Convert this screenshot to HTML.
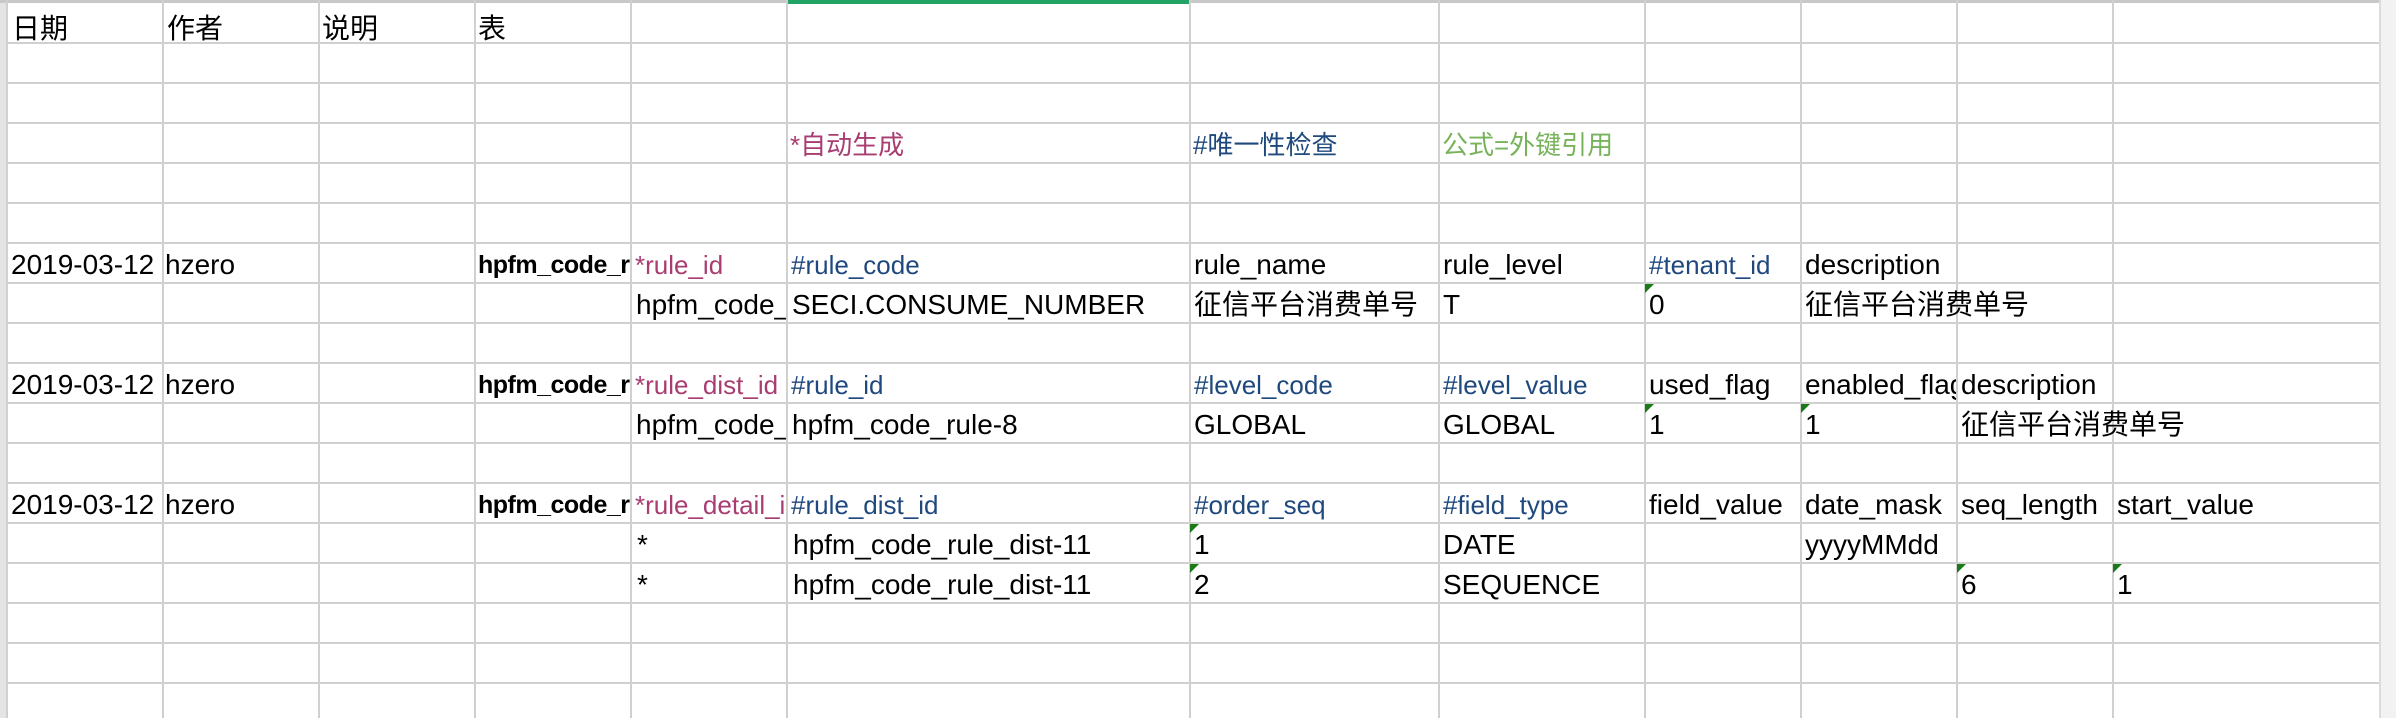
<!DOCTYPE html>
<html><head><meta charset="utf-8"><style>
body{margin:0;width:2396px;height:718px;overflow:hidden;background:#fff;position:relative;font-family:"Liberation Sans","Noto Sans CJK SC",sans-serif;}
.v{position:absolute;top:0;height:718px;width:2px;background:#d0d0d0}
.h{position:absolute;left:6px;width:2373px;height:2px;background:#d0d0d0}
.c{position:absolute;height:40px;line-height:44px;font-size:28px;color:#000;white-space:nowrap;overflow:hidden}
.m{color:#a83d72;font-size:26px}
.b{color:#1f497d;font-size:26px}
.g{color:#77b35a;font-size:26px}
.t{font-size:25px;font-weight:bold;letter-spacing:-0.5px}
.cj{font-size:28px}
.hd{line-height:52px}
.tri{position:absolute;width:0;height:0;border-top:9px solid #1a7a1a;border-right:9px solid transparent}
</style></head><body>
<div style="position:absolute;left:0;top:0;width:6px;height:718px;background:#e4e4e4"></div>
<div style="position:absolute;left:2379px;top:0;width:17px;height:718px;background:#f2f2f2;border-left:2px solid #dcdcdc"></div>
<div style="position:absolute;left:0;top:0;width:2379px;height:3px;background:#c8c8c8"></div>
<div style="position:absolute;left:787px;top:0;width:403px;height:4px;background:#21a366"></div>

<div class="v" style="left:6px"></div><div class="v" style="left:162px"></div><div class="v" style="left:318px"></div><div class="v" style="left:474px"></div><div class="v" style="left:630px"></div><div class="v" style="left:786px"></div><div class="v" style="left:1189px"></div><div class="v" style="left:1438px"></div><div class="v" style="left:1644px"></div><div class="v" style="left:1800px"></div><div class="v" style="left:1956px"></div><div class="v" style="left:2112px"></div>
<div class="h" style="top:42px"></div><div class="h" style="top:82px"></div><div class="h" style="top:122px"></div><div class="h" style="top:162px"></div><div class="h" style="top:202px"></div><div class="h" style="top:242px"></div><div class="h" style="top:282px"></div><div class="h" style="top:322px"></div><div class="h" style="top:362px"></div><div class="h" style="top:402px"></div><div class="h" style="top:442px"></div><div class="h" style="top:482px"></div><div class="h" style="top:522px"></div><div class="h" style="top:562px"></div><div class="h" style="top:602px"></div><div class="h" style="top:642px"></div><div class="h" style="top:682px"></div>

<div class="c cj hd" style="top:3px;left:12px">日期</div>
<div class="c cj hd" style="top:3px;left:167px">作者</div>
<div class="c cj hd" style="top:3px;left:322px">说明</div>
<div class="c cj hd" style="top:3px;left:478px">表</div>

<div class="c m" style="top:123px;left:790px">*自动生成</div>
<div class="c b" style="top:123px;left:1193px">#唯一性检查</div>
<div class="c g" style="top:123px;left:1442px">公式=外键引用</div>

<!-- block 1 -->
<div class="c" style="top:243px;left:11px;width:151px">2019-03-12</div>
<div class="c" style="top:243px;left:165px">hzero</div>
<div class="c t" style="top:243px;left:478px;width:152px">hpfm_code_rule</div>
<div class="c m" style="top:243px;left:635px;width:151px">*rule_id</div>
<div class="c b" style="top:243px;left:791px">#rule_code</div>
<div class="c" style="top:243px;left:1194px">rule_name</div>
<div class="c" style="top:243px;left:1443px">rule_level</div>
<div class="c b" style="top:243px;left:1649px">#tenant_id</div>
<div class="c" style="top:243px;left:1805px">description</div>
<div class="c" style="top:283px;left:636px;width:150px">hpfm_code_rule-1</div>
<div class="c" style="top:283px;left:792px">SECI.CONSUME_NUMBER</div>
<div class="c cj" style="top:283px;left:1194px">征信平台消费单号</div>
<div class="c" style="top:283px;left:1443px">T</div>
<div class="tri" style="top:284px;left:1645px"></div>
<div class="c" style="top:283px;left:1649px">0</div>
<div class="c cj" style="top:283px;left:1805px">征信平台消费单号</div>

<!-- block 2 -->
<div class="c" style="top:363px;left:11px;width:151px">2019-03-12</div>
<div class="c" style="top:363px;left:165px">hzero</div>
<div class="c t" style="top:363px;left:478px;width:152px">hpfm_code_rule</div>
<div class="c m" style="top:363px;left:635px;width:151px">*rule_dist_id</div>
<div class="c b" style="top:363px;left:791px">#rule_id</div>
<div class="c b" style="top:363px;left:1194px">#level_code</div>
<div class="c b" style="top:363px;left:1443px">#level_value</div>
<div class="c" style="top:363px;left:1649px">used_flag</div>
<div class="c" style="top:363px;left:1805px;width:151px">enabled_flag</div>
<div class="c" style="top:363px;left:1961px">description</div>
<div class="c" style="top:403px;left:636px;width:150px">hpfm_code_rule-1</div>
<div class="c" style="top:403px;left:792px">hpfm_code_rule-8</div>
<div class="c" style="top:403px;left:1194px">GLOBAL</div>
<div class="c" style="top:403px;left:1443px">GLOBAL</div>
<div class="tri" style="top:404px;left:1645px"></div>
<div class="c" style="top:403px;left:1649px">1</div>
<div class="tri" style="top:404px;left:1801px"></div>
<div class="c" style="top:403px;left:1805px">1</div>
<div class="c cj" style="top:403px;left:1961px">征信平台消费单号</div>

<!-- block 3 -->
<div class="c" style="top:483px;left:11px;width:151px">2019-03-12</div>
<div class="c" style="top:483px;left:165px">hzero</div>
<div class="c t" style="top:483px;left:478px;width:152px">hpfm_code_rule</div>
<div class="c m" style="top:483px;left:635px;width:151px">*rule_detail_id</div>
<div class="c b" style="top:483px;left:791px">#rule_dist_id</div>
<div class="c b" style="top:483px;left:1194px">#order_seq</div>
<div class="c b" style="top:483px;left:1443px">#field_type</div>
<div class="c" style="top:483px;left:1649px;width:151px">field_value</div>
<div class="c" style="top:483px;left:1805px;width:151px">date_mask</div>
<div class="c" style="top:483px;left:1961px;width:151px">seq_length</div>
<div class="c" style="top:483px;left:2117px">start_value</div>

<div class="c" style="top:523px;left:637px">*</div>
<div class="c" style="top:523px;left:793px">hpfm_code_rule_dist-11</div>
<div class="tri" style="top:524px;left:1190px"></div>
<div class="c" style="top:523px;left:1194px">1</div>
<div class="c" style="top:523px;left:1443px">DATE</div>
<div class="c" style="top:523px;left:1805px">yyyyMMdd</div>

<div class="c" style="top:563px;left:637px">*</div>
<div class="c" style="top:563px;left:793px">hpfm_code_rule_dist-11</div>
<div class="tri" style="top:564px;left:1190px"></div>
<div class="c" style="top:563px;left:1194px">2</div>
<div class="c" style="top:563px;left:1443px">SEQUENCE</div>
<div class="tri" style="top:564px;left:1957px"></div>
<div class="c" style="top:563px;left:1961px">6</div>
<div class="tri" style="top:564px;left:2113px"></div>
<div class="c" style="top:563px;left:2117px">1</div>
</body></html>
